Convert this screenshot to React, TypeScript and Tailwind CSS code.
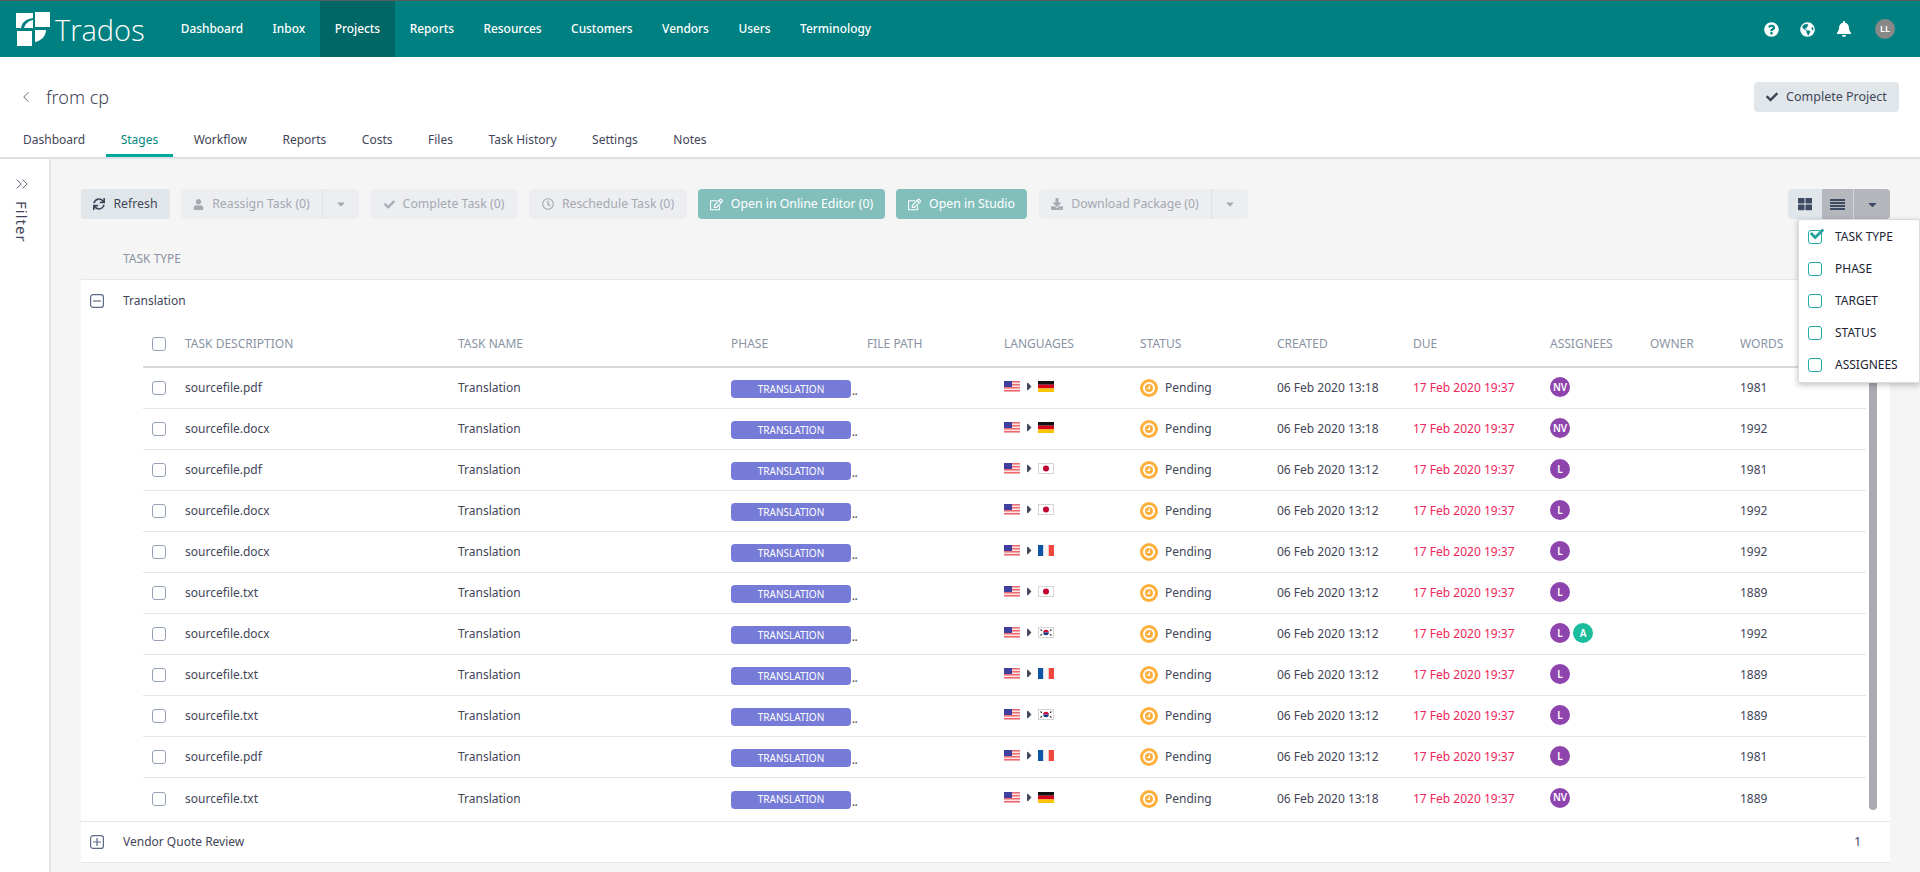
import {
  FaBell,
  FaCaretDown,
  FaCaretRight,
  FaCheck,
  FaDownload,
  FaGlobeAmericas,
  FaQuestionCircle,
  FaRegClock,
  FaRegEdit,
  FaSync,
  FaThLarge,
  FaUser,
} from "react-icons/fa";
import { ChevronLeft, ChevronsRight } from "lucide-react";
import type { ReactNode } from "react";

const navItems = ["Dashboard", "Inbox", "Projects", "Reports", "Resources", "Customers", "Vendors", "Users", "Terminology"];
const tabs = ["Dashboard", "Stages", "Workflow", "Reports", "Costs", "Files", "Task History", "Settings", "Notes"];
const columns = ["TASK DESCRIPTION", "TASK NAME", "PHASE", "FILE PATH", "LANGUAGES", "STATUS", "CREATED", "DUE", "ASSIGNEES", "OWNER", "WORDS"];
const menuItems = ["TASK TYPE", "PHASE", "TARGET", "STATUS", "ASSIGNEES"];

type Flag = "de" | "jp" | "fr" | "kr";
type Row = { file: string; flag: Flag; created: string; who: string[]; words: number };

const rows: Row[] = [
  { file: "sourcefile.pdf", flag: "de", created: "06 Feb 2020 13:18", who: ["NV"], words: 1981 },
  { file: "sourcefile.docx", flag: "de", created: "06 Feb 2020 13:18", who: ["NV"], words: 1992 },
  { file: "sourcefile.pdf", flag: "jp", created: "06 Feb 2020 13:12", who: ["L"], words: 1981 },
  { file: "sourcefile.docx", flag: "jp", created: "06 Feb 2020 13:12", who: ["L"], words: 1992 },
  { file: "sourcefile.docx", flag: "fr", created: "06 Feb 2020 13:12", who: ["L"], words: 1992 },
  { file: "sourcefile.txt", flag: "jp", created: "06 Feb 2020 13:12", who: ["L"], words: 1889 },
  { file: "sourcefile.docx", flag: "kr", created: "06 Feb 2020 13:12", who: ["L", "A"], words: 1992 },
  { file: "sourcefile.txt", flag: "fr", created: "06 Feb 2020 13:12", who: ["L"], words: 1889 },
  { file: "sourcefile.txt", flag: "kr", created: "06 Feb 2020 13:12", who: ["L"], words: 1889 },
  { file: "sourcefile.pdf", flag: "fr", created: "06 Feb 2020 13:12", who: ["L"], words: 1981 },
  { file: "sourcefile.txt", flag: "de", created: "06 Feb 2020 13:18", who: ["NV"], words: 1889 },
];

const gridCols = "grid grid-cols-[42px_273px_273px_136px_137px_136px_137px_136px_137px_100px_90px_1fr] items-center";

function Logo() {
  return (
    <svg width="36" height="36" viewBox="0 0 36 36" fill="#fff" className="shrink-0">
      <path d="M19 1h15v15H19z" />
      <path d="M0 2h17v5C10 8 6 11 5 17H0z" />
      <path d="M17 9v8H8c1-4 4-7 9-8z" />
      <path d="M1 20h15v15H1z" />
      <path d="M19 19h11c0 6-5 11-11 12z" />
    </svg>
  );
}

function UsFlag() {
  return (
    <svg width="16" height="11" viewBox="0 0 16 11" className="shrink-0">
      <rect width="16" height="11" fill="#fbe4e4" />
      <path d="M0 0h16v1.5H0zM0 3h16v1.5H0zM0 6h16v1.5H0zM0 9h16v1.5H0z" fill="#ee6a6f" />
      <rect width="8" height="6" fill="#3f3f9f" />
    </svg>
  );
}

function TargetFlag({ flag }: { flag: Flag }) {
  if (flag === "de") {
    return (
      <svg width="16" height="11" viewBox="0 0 16 11" className="shrink-0">
        <rect width="16" height="3.7" fill="#111" />
        <rect y="3.7" width="16" height="3.7" fill="#d8001a" />
        <rect y="7.4" width="16" height="3.6" fill="#fbc400" />
      </svg>
    );
  }
  if (flag === "fr") {
    return (
      <svg width="16" height="11" viewBox="0 0 16 11" className="shrink-0">
        <rect width="5.4" height="11" fill="#0f55a5" />
        <rect x="5.4" width="5.3" height="11" fill="#f4f4f4" />
        <rect x="10.7" width="5.3" height="11" fill="#f2473f" />
      </svg>
    );
  }
  if (flag === "jp") {
    return (
      <svg width="16" height="11" viewBox="0 0 16 11" className="shrink-0">
        <rect x=".5" y=".5" width="15" height="10" fill="#fff" stroke="#d5d5d5" />
        <circle cx="8" cy="5.5" r="3" fill="#c3002f" />
      </svg>
    );
  }
  return (
    <svg width="16" height="11" viewBox="0 0 16 11" className="shrink-0">
      <rect x=".5" y=".5" width="15" height="10" fill="#fff" stroke="#d5d5d5" />
      <path d="M5.2 5.5a2.8 2.8 0 0 1 5.6 0z" fill="#d0103a" />
      <path d="M5.2 5.5a2.8 2.8 0 0 0 5.6 0z" fill="#0f3d8c" />
      <path d="M2.5 2.5l1.5 1.2M2.5 8.5L4 7.3M13.5 2.5L12 3.7M13.5 8.5L12 7.3" stroke="#333" strokeWidth="1.1" />
    </svg>
  );
}

function PendingIcon() {
  return (
    <svg width="18" height="18" viewBox="0 0 18 18" className="shrink-0">
      <circle cx="9" cy="9" r="9" fill="#fdb03c" />
      <circle cx="9" cy="9" r="5" fill="none" stroke="#fff" strokeWidth="2" />
      <path d="M9.4 6.4v3H7.2" fill="none" stroke="#fff" strokeWidth="1.1" />
    </svg>
  );
}

function ListIcon() {
  return (
    <svg width="15" height="11" viewBox="0 0 15 11" fill="#3f4a63">
      <path d="M0 0h15v2H0zM0 3h15v2H0zM0 6h15v2H0zM0 9h15v2H0z" />
    </svg>
  );
}

function Expander({ open }: { open: boolean }) {
  return (
    <svg width="14" height="14" viewBox="0 0 14 14" className="shrink-0">
      <rect x=".6" y=".6" width="12.8" height="12.8" rx="2.5" fill="none" stroke="#5d6a85" strokeWidth="1.2" />
      <path d={open ? "M3 7h8" : "M3 7h8M7 3v8"} stroke="#5d6a85" strokeWidth="1.2" />
    </svg>
  );
}

function Checkbox() {
  return <span className="box-border block w-[14px] h-[14px] rounded-[3px] border-[1.5px] border-[#95a0b4] bg-white" />;
}

function ToolButton({ icon, label, kind, width, caret }: { icon: ReactNode; label: string; kind: "plain" | "off" | "teal"; width: string; caret?: boolean }) {
  const tone =
    kind === "plain"
      ? "bg-[#e1e6ea] text-[#3f4658]"
      : kind === "teal"
        ? "bg-[#82bfbb] text-white"
        : "bg-[#eceef1] text-[#a5a9b1]";
  return (
    <div className={`flex h-[30px] items-center rounded-[4px] text-[12.3px] ${tone} ${width}`}>
      <div className="flex flex-1 items-center justify-center gap-[8px] whitespace-nowrap">
        {icon}
        {label}
      </div>
      {caret && (
        <div className="flex h-full w-[37px] items-center justify-center border-l border-[#dfe2e6]">
          <FaCaretDown size={12} className="text-[#a5a9b1]" />
        </div>
      )}
    </div>
  );
}

function Avatar({ name }: { name: string }) {
  return (
    <span className={`flex h-[20px] w-[20px] items-center justify-center rounded-full text-[10px] font-semibold text-white ${name === "A" ? "bg-[#1abc9c]" : "bg-[#8e44ad]"}`}>
      {name}
    </span>
  );
}

export default function App() {
  return (
    <div className="flex h-[872px] w-[1920px] flex-col overflow-hidden bg-white font-['Noto_Sans',sans-serif] text-[12px] text-[#3f4658]">
      <header className="flex h-[57px] items-stretch border-t border-[#55605f] bg-[#008080] pl-[16px] pr-[25px] text-white">
        <div className="flex w-[150px] items-center gap-[3px]">
          <Logo />
          <span className="font-['Open_Sans',sans-serif] text-[29px] font-light leading-none">Trados</span>
        </div>
        <nav className="flex items-stretch">
          {navItems.map((item) => (
            <span key={item} className={`flex items-center px-[14.75px] text-[11.9px] font-medium ${item === "Projects" ? "bg-[#006666]" : ""}`}>
              {item}
            </span>
          ))}
        </nav>
        <div className="ml-auto flex items-center gap-[21px]">
          <FaQuestionCircle size={15} />
          <FaGlobeAmericas size={15} />
          <FaBell size={16} />
          <span className="ml-[2px] flex h-[20px] w-[20px] items-center justify-center rounded-full bg-[#888] text-[9px] font-semibold">LL</span>
        </div>
      </header>

      <div className="flex h-[68px] items-start justify-between pl-[17px] pr-[21px] pt-[25px]">
        <div className="flex h-[30px] items-center gap-[11px]">
          <ChevronLeft size={18} strokeWidth={1.3} className="text-[#5d6478]" />
          <span className="text-[18px] font-light leading-none">from cp</span>
        </div>
        <button className="flex h-[30px] w-[145px] items-center justify-center gap-[8px] rounded-[4px] bg-[#e1e6ea] text-[12.5px]">
          <FaCheck size={12} />
          Complete Project
        </button>
      </div>

      <div className="flex h-[34px] items-stretch gap-[5.5px] border-b-2 border-[#dcdfe4] pl-[8px]">
        {tabs.map((tab) => (
          <span key={tab} className={`box-border flex items-center px-[15px] ${tab === "Stages" ? "border-b-[3px] border-[#00a89a] text-[#00897f]" : "border-b-[3px] border-transparent"}`}>
            {tab}
          </span>
        ))}
      </div>

      <div className="flex min-h-0 flex-1">
        <aside className="flex w-[51px] shrink-0 flex-col items-center border-r-2 border-[#e1e5ea] pr-[6px] pt-[15px]">
          <ChevronsRight size={20} strokeWidth={1.2} className="text-[#5d6478]" />
          <span className="mt-[7px] text-[15px] leading-none tracking-[1px] [writing-mode:vertical-rl]">Filter</span>
        </aside>

        <main className="min-w-0 flex-1 bg-[#f5f5f5] px-[30px] pt-[30px]">
          <div className="flex items-start">
            <div className="flex gap-[11px]">
              <ToolButton kind="plain" width="w-[89px]" icon={<FaSync size={12} />} label="Refresh" />
              <ToolButton kind="off" width="w-[178px]" icon={<FaUser size={11} />} label="Reassign Task (0)" caret />
              <ToolButton kind="off" width="w-[148px]" icon={<FaCheck size={11} />} label="Complete Task (0)" />
              <ToolButton kind="off" width="w-[158px]" icon={<FaRegClock size={12} />} label="Reschedule Task (0)" />
              <ToolButton kind="teal" width="w-[187px]" icon={<FaRegEdit size={13} />} label="Open in Online Editor (0)" />
              <ToolButton kind="teal" width="w-[131px]" icon={<FaRegEdit size={13} />} label="Open in Studio" />
            </div>
            <div className="ml-[12px]">
              <ToolButton kind="off" width="w-[209px]" icon={<FaDownload size={12} />} label="Download Package (0)" caret />
            </div>
            <div className="relative ml-auto flex h-[30px] w-[102px] overflow-visible rounded-[4px] bg-[#e1e6ea]">
              <span className="flex w-[34px] items-center justify-center text-[#3f4a63]">
                <FaThLarge size={14} />
              </span>
              <span className="flex w-[31px] items-center justify-center bg-[#b4b7bc]">
                <ListIcon />
              </span>
              <span className="flex flex-1 items-center justify-center rounded-r-[4px] border-l border-[#d3d5d8] bg-[#b4b7bc] text-[#3f4a63]">
                <FaCaretDown size={13} />
              </span>
              <div className="absolute right-[-30px] top-[30px] z-10 box-border w-[122px] border border-[#dcdcdc] bg-white py-[1px] pl-[9px] text-black shadow-[0_2px_6px_rgba(0,0,0,0.25)]">
                {menuItems.map((item, i) => (
                  <div key={item} className="flex h-[32px] items-center gap-[13px] text-[12px] text-[#221f33]">
                    <span className="relative box-border block h-[14px] w-[14px] rounded-[3px] border border-[#20aba3]">
                      {i === 0 && <FaCheck size={14} className="absolute left-[1px] top-[-4px] text-[#20a39b]" />}
                    </span>
                    {item}
                  </div>
                ))}
              </div>
            </div>
          </div>

          <div className="mt-[19px] flex h-[41px] items-center pl-[42px] text-[#8a93a3]">TASK TYPE</div>

          <section className="border-y border-[#e3e6ea] bg-white">
            <div className="flex h-[42px] items-center gap-[19px] pl-[9px]">
              <Expander open />
              <span>Translation</span>
            </div>

            <div className="relative ml-[62px] mr-[24px]">
              <div className={`${gridCols} h-[46px] border-b-2 border-[#d8dade] text-[#8a93a3]`}>
                <span className="pl-[9px]">
                  <Checkbox />
                </span>
                {columns.map((col) => (
                  <span key={col} className="whitespace-nowrap">
                    {col}
                  </span>
                ))}
              </div>

              {rows.map((row, i) => (
                <div key={i} className={`${gridCols} box-border h-[41px] border-[#e3e6ea] ${i < rows.length - 1 ? "border-b" : ""}`}>
                  <span className="pl-[9px]">
                    <Checkbox />
                  </span>
                  <span>{row.file}</span>
                  <span>Translation</span>
                  <span className="col-span-2 flex items-end">
                    <span className="mt-[2px] flex h-[18px] w-[120px] items-center justify-center rounded-[4px] bg-[#757bd6] text-[10px] text-white">TRANSLATION</span>
                    <span className="ml-[1px] h-[18px] text-[10px] font-bold leading-[22px] text-[#555]">..</span>
                  </span>
                  <span className="mb-[3px] flex items-center">
                    <UsFlag />
                    <FaCaretRight size={13} className="ml-[3px] mr-[2px] text-[#3f4658]" />
                    <TargetFlag flag={row.flag} />
                  </span>
                  <span className="flex items-center gap-[7px]">
                    <PendingIcon />
                    Pending
                  </span>
                  <span>{row.created}</span>
                  <span className="text-[#f0265a]">17 Feb 2020 19:37</span>
                  <span className="mb-[2px] flex gap-[3px]">
                    {row.who.map((name) => (
                      <Avatar key={name} name={name} />
                    ))}
                  </span>
                  <span />
                  <span>{row.words}</span>
                </div>
              ))}
              <div className="h-[2px]" />
              <div className="absolute right-[-11px] top-[46px] h-[442px] w-[8px] rounded-b-[4px] bg-[#a9abb0]" />
            </div>

            <div className="flex h-[41px] items-center gap-[19px] border-t border-[#e3e6ea] pl-[9px] pr-[29px]">
              <Expander open={false} />
              <span>Vendor Quote Review</span>
              <span className="ml-auto">1</span>
            </div>
          </section>
        </main>
      </div>
    </div>
  );
}
